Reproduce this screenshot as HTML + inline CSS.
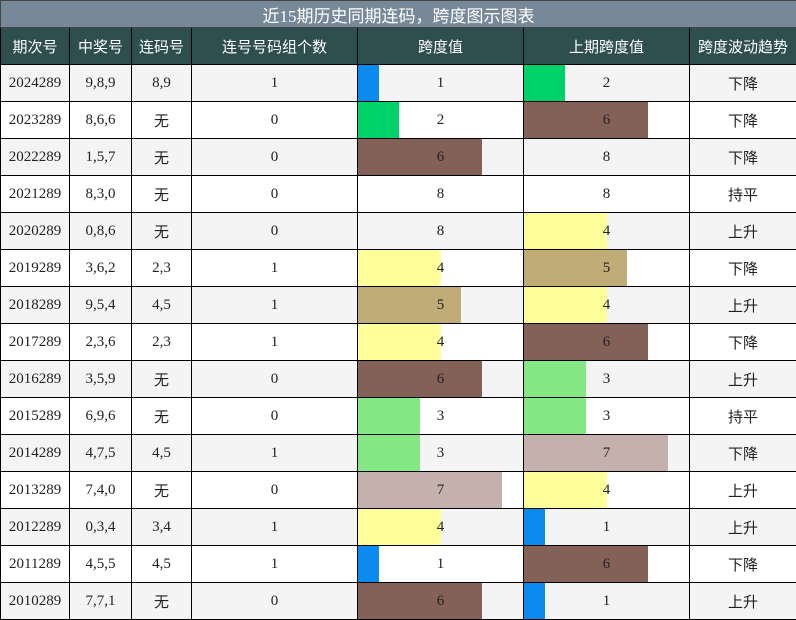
<!DOCTYPE html>
<html><head><meta charset="utf-8"><style>
*{margin:0;padding:0;box-sizing:border-box}
body{width:796px;height:620px;overflow:hidden;background:#fff}
table{border-collapse:collapse;table-layout:fixed;width:796px}
td{border:1px solid #000;text-align:center;font-family:"Liberation Serif",serif;font-size:15px;color:#222;height:37px;padding:0;position:relative}
tr.t td{height:27px;background:#778899;color:#fff;font-family:"Liberation Serif","Noto Sans CJK SC",sans-serif;font-size:17px;border:1px solid #444}
tr.h td{background:#2f4f4f;color:#fff;font-family:"Liberation Sans","Noto Sans CJK SC",sans-serif;font-size:15px;border-color:#000}
tr.g td{background:#f4f4f4}
.c{font-family:"Liberation Sans","Noto Sans CJK SC",sans-serif;font-size:15px}
.b{position:absolute;left:0;top:0;bottom:0}
.n{position:relative;z-index:1}
</style></head><body>
<table>
<colgroup><col style="width:69px"><col style="width:62px"><col style="width:60px"><col style="width:166px"><col style="width:166px"><col style="width:166px"><col style="width:107px"></colgroup>
<tr class="t"><td colspan="7">近15期历史同期连码，跨度图示图表</td></tr>
<tr class="h"><td>期次号</td><td>中奖号</td><td>连码号</td><td>连号号码组个数</td><td>跨度值</td><td>上期跨度值</td><td>跨度波动趋势</td></tr>
<tbody id="tb"></tbody>
</table>
<script>
var d=[["2024289","9,8,9","8,9",1,1,2,"下降"],["2023289","8,6,6","无",0,2,6,"下降"],["2022289","1,5,7","无",0,6,8,"下降"],["2021289","8,3,0","无",0,8,8,"持平"],["2020289","0,8,6","无",0,8,4,"上升"],["2019289","3,6,2","2,3",1,4,5,"下降"],["2018289","9,5,4","4,5",1,5,4,"上升"],["2017289","2,3,6","2,3",1,4,6,"下降"],["2016289","3,5,9","无",0,6,3,"上升"],["2015289","6,9,6","无",0,3,3,"持平"],["2014289","4,7,5","4,5",1,3,7,"下降"],["2013289","7,4,0","无",0,7,4,"上升"],["2012289","0,3,4","3,4",1,4,1,"上升"],["2011289","4,5,5","4,5",1,1,6,"下降"],["2010289","7,7,1","无",0,6,1,"上升"]];
var col={1:"#0b8af0",2:"#00d26a",3:"#83e883",4:"#ffff99",5:"#c0ac76",6:"#836157",7:"#c4b1ad",8:"transparent"};
function bar(v){return '<td><div class="b" style="width:'+(v/8*100)+'%;background:'+col[v]+'"></div><span class="n">'+v+'</span></td>';}
var h="";
d.forEach(function(r,i){
h+='<tr'+(i%2==0?' class="g"':'')+'><td>'+r[0]+'</td><td>'+r[1]+'</td><td'+(r[2]=="无"?' class="c"':'')+'>'+r[2]+'</td><td>'+r[3]+'</td>'+bar(r[4])+bar(r[5])+'<td class="c">'+r[6]+'</td></tr>';
});
document.getElementById("tb").innerHTML=h;
</script>
</body></html>
